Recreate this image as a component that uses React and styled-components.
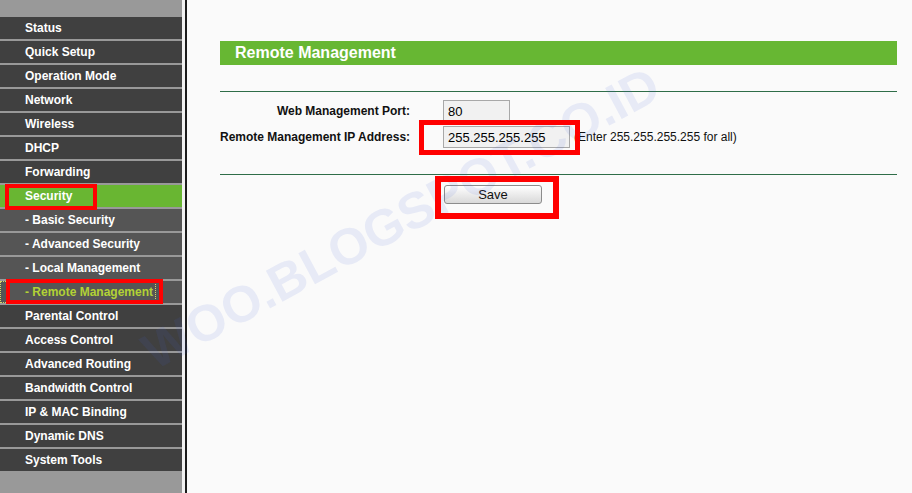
import React from 'react';
import styled, { createGlobalStyle } from 'styled-components';

const GlobalStyle = createGlobalStyle`
  html, body {
    margin: 0;
    padding: 0;
    background: #fafafa;
    font-family: "Liberation Sans", Arial, sans-serif;
  }
`;

const menu = [
  { label: 'Status' },
  { label: 'Quick Setup' },
  { label: 'Operation Mode' },
  { label: 'Network' },
  { label: 'Wireless' },
  { label: 'DHCP' },
  { label: 'Forwarding' },
  { label: 'Security', active: true },
  { label: '- Basic Security', sub: true },
  { label: '- Advanced Security', sub: true },
  { label: '- Local Management', sub: true },
  { label: '- Remote Management', sub: true, current: true },
  { label: 'Parental Control' },
  { label: 'Access Control' },
  { label: 'Advanced Routing' },
  { label: 'Bandwidth Control' },
  { label: 'IP & MAC Binding' },
  { label: 'Dynamic DNS' },
  { label: 'System Tools' },
];

export default function App() {
  return (
    <>
      <GlobalStyle />
      <Page>
        <Sidebar>
          {menu.map((item) => (
            <NavItem key={item.label} $sub={item.sub} $active={item.active}>
              <NavLink $current={item.current}>{item.label}</NavLink>
            </NavItem>
          ))}
        </Sidebar>
        <Main>
          <TitleBar>Remote Management</TitleBar>
          <Form>
            <Row>
              <Label>Web Management Port:</Label>
              <Field $width={67} defaultValue="80" />
            </Row>
            <Row>
              <Label>Remote Management IP Address:</Label>
              <Field $width={127} defaultValue="255.255.255.255" />
              <Hint>(Enter 255.255.255.255 for all)</Hint>
            </Row>
          </Form>
          <ButtonRow>
            <SaveButton>Save</SaveButton>
          </ButtonRow>
        </Main>

        <Watermark>WOO.BLOGSPOT.CO.ID</Watermark>

        <Marker $x={5} $y={184} $w={92} $h={26} $b={4} />
        <Marker $x={6} $y={279} $w={157} $h={25} $b={4} />
        <Marker $x={419} $y={120} $w={161} $h={35} $b={5} />
        <Marker $x={435} $y={176} $w={124} $h={43} $b={6} />
      </Page>
    </>
  );
}

const Page = styled.div`
  position: relative;
  display: flex;
  width: 912px;
  height: 493px;
  overflow: hidden;
  background: #f2f2f2;
`;

const Sidebar = styled.nav`
  width: 182px;
  flex-shrink: 0;
  margin-right: 3px;
  padding-top: 17px;
  box-sizing: border-box;
  background: #999999;
  display: flex;
  flex-direction: column;
  gap: 2px;
`;

const NavItem = styled.div`
  height: 22px;
  padding-left: 1px;
  display: flex;
  align-items: center;
  background: ${(p) => (p.$active ? '#69b632' : p.$sub ? '#555555' : '#404040')};
`;

const NavLink = styled.a`
  display: inline-block;
  padding: 0 2px 0 24px;
  line-height: 20px;
  font-size: 12px;
  font-weight: bold;
  color: ${(p) => (p.$current ? '#b2d235' : '#ffffff')};
  outline: ${(p) => (p.$current ? '1px dotted #d6d66a' : 'none')};
  white-space: nowrap;
`;

const Main = styled.main`
  flex: 1;
  border-left: 2px solid #1c1c1c;
  background: #fafafa;
  padding: 41px 15px 0 33px;
`;

const TitleBar = styled.div`
  height: 24px;
  line-height: 24px;
  padding-left: 15px;
  background: #67b733;
  color: #ffffff;
  font-size: 16px;
  font-weight: bold;
`;

const Form = styled.div`
  margin-top: 26px;
  padding: 8px 0 26px;
  border-top: 1px solid #2f6d48;
  border-bottom: 1px solid #2f6d48;
  display: flex;
  flex-direction: column;
  gap: 4px;
`;

const Row = styled.div`
  display: flex;
  align-items: center;
  height: 22px;
`;

const Label = styled.div`
  width: 190px;
  margin-right: 33px;
  text-align: right;
  font-size: 12px;
  font-weight: bold;
  color: #111111;
  white-space: nowrap;
`;

const Field = styled.input`
  width: ${(p) => p.$width}px;
  height: 22px;
  box-sizing: border-box;
  padding: 0 4px;
  border: 1px solid #a8a8a8;
  background: #f1f1f1;
  font-family: "Liberation Sans", Arial, sans-serif;
  font-size: 13px;
  color: #000000;
`;

const Hint = styled.span`
  margin-left: 4px;
  font-size: 12px;
  color: #111111;
  white-space: nowrap;
`;

const ButtonRow = styled.div`
  padding: 10px 0 0 224px;
`;

const SaveButton = styled.button`
  width: 98px;
  height: 19px;
  padding: 0;
  border: 1px solid #8c8c8c;
  border-radius: 3px;
  background: linear-gradient(#fefefe, #d9d9d9);
  font-family: "Liberation Sans", Arial, sans-serif;
  font-size: 13px;
  color: #111111;
`;

const Watermark = styled.div`
  position: absolute;
  left: 401px;
  top: 218px;
  transform: translate(-50%, -50%) rotate(-28.3deg);
  font-size: 51px;
  line-height: 1;
  font-weight: bold;
  color: rgba(70, 100, 220, 0.1);
  white-space: nowrap;
  pointer-events: none;
`;

const Marker = styled.div`
  position: absolute;
  left: ${(p) => p.$x}px;
  top: ${(p) => p.$y}px;
  width: ${(p) => p.$w}px;
  height: ${(p) => p.$h}px;
  box-sizing: border-box;
  border: ${(p) => p.$b}px solid #ff0000;
  pointer-events: none;
`;
